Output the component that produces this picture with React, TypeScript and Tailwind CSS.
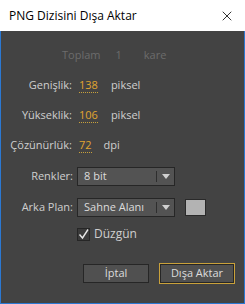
import { X } from "lucide-react";

function Dropdown({ value }: { value: string }) {
  return (
    <div className="flex h-[19px] w-[98px] items-stretch border border-[#262626] bg-[#535353] text-[#dcdcdc]">
      <div className="flex flex-1 items-center pl-[6px]">{value}</div>
      <div className="my-[3px] w-px bg-[#2e2e2e]" />
      <div className="flex w-[17px] items-center justify-center">
        <svg width="8" height="5" viewBox="0 0 8 5">
          <path d="M0 0 H8 L4 5 Z" fill="#d0d0d0" />
        </svg>
      </div>
    </div>
  );
}

function Field({ label, value, unit, gap }: { label: string; value: string; unit: string; gap: string }) {
  return (
    <div className="flex h-[30px] items-center">
      <div className="w-[78px] pr-[7px] text-right">{label}</div>
      <span className="border-b border-dotted border-[#c9a13b] leading-[14px] text-[#e0a530]">{value}</span>
      <span className={gap}>{unit}</span>
    </div>
  );
}

export default function App() {
  return (
    <div
      className="flex h-[304px] w-[245px] flex-col text-[11px]"
      style={{ fontFamily: '"Open Sans", "DejaVu Sans", sans-serif' }}
    >
      <div className="flex h-[31px] items-center justify-between bg-white pl-[9px] pr-[10px] text-[12px] text-black">
        <span>PNG Dizisini Dışa Aktar</span>
        <X size={16} strokeWidth={1.2} />
      </div>
      <div className="flex flex-1 flex-col border-x border-b border-[#2b78d2] bg-[#434343] text-[#cfcfcf]">
        <div className="flex h-[32px] items-end pl-[61px] text-[#6c6c6c]">
          <span>Toplam</span>
          <span className="ml-[15px]">1</span>
          <span className="ml-[22px]">kare</span>
        </div>
        <div className="mt-[7px]">
          <Field label="Genişlik:" value="138" unit="piksel" gap="ml-[13px]" />
          <Field label="Yükseklik:" value="106" unit="piksel" gap="ml-[13px]" />
          <Field label="Çözünürlük:" value="72" unit="dpi" gap="ml-[12px]" />
        </div>
        <div className="mt-[7px] flex h-[19px] items-center">
          <div className="w-[76px] pr-[4px] text-right">Renkler:</div>
          <Dropdown value="8 bit" />
        </div>
        <div className="mt-[12px] flex h-[19px] items-center">
          <div className="w-[76px] pr-[4px] text-right">Arka Plan:</div>
          <Dropdown value="Sahne Alanı" />
          <div className="ml-[10px] h-[17px] w-[21px] border border-[#2a2a2a] bg-[#b3b3b3]" />
        </div>
        <div className="mt-[8px] flex items-center pl-[76px]">
          <div className="flex h-[13px] w-[13px] items-center justify-center border border-[#262626] bg-[#3a3a3a]">
            <svg width="11" height="11" viewBox="0 0 11 11">
              <path d="M1.5 5.5 L4.5 9 L10 0.5" fill="none" stroke="#e6e6e6" strokeWidth="1.4" />
            </svg>
          </div>
          <span className="ml-[4px] text-[12px]">Düzgün</span>
        </div>
        <div className="mt-auto mb-[19px] flex items-center justify-end gap-[10px] pr-[9px]">
          <button className="h-[19px] w-[66px] border border-[#262626] bg-[#505050] text-[#dcdcdc]">İptal</button>
          <button className="h-[21px] w-[76px] border border-[#c9a13b] bg-[#505050] text-[#dcdcdc] outline outline-1 -outline-offset-2 outline-[#262626]">
            Dışa Aktar
          </button>
        </div>
      </div>
    </div>
  );
}
